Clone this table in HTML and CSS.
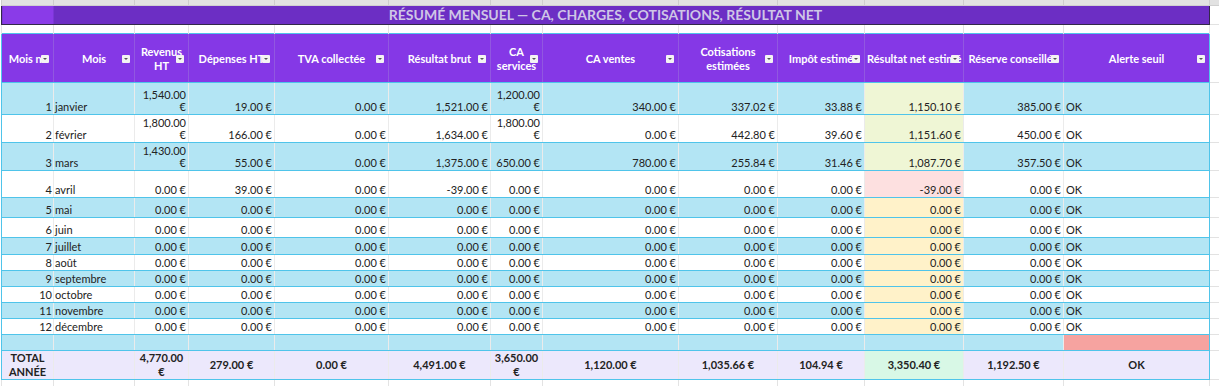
FILE: index.html
```html
<!DOCTYPE html>
<html lang="fr">
<head>
<meta charset="utf-8">
<title>Résumé mensuel</title>
<link rel="stylesheet" href="styles.css">
</head>
<body>
<table class="sheet">
  <colgroup>
    <col class="ca"><col class="cb"><col class="cc"><col class="cd"><col class="ce"><col class="cf"><col class="cg"><col class="ch"><col class="ci"><col class="cj"><col class="ck"><col class="cl"><col class="cm"><col class="cx">
  </colgroup>
  <tr class="r-top"><td></td><td></td><td></td><td></td><td></td><td></td><td></td><td></td><td></td><td></td><td></td><td></td><td></td><td></td></tr>
  <tr class="r-title"><td class="title" colspan="13">Résumé mensuel — CA, charges, cotisations, résultat net</td><td class="x"></td></tr>
  <tr class="r-gap"><td></td><td></td><td></td><td></td><td></td><td></td><td></td><td></td><td></td><td></td><td></td><td></td><td></td><td></td></tr>
  <tr class="r-head">
    <th class="first"><div class="hd">Mois n°</div><span class="fb"></span></th>
    <th><div class="hd">Mois</div><span class="fb"></span></th>
    <th><div class="hd wrap">Revenus HT</div><span class="fb"></span></th>
    <th><div class="hd">Dépenses HT</div><span class="fb"></span></th>
    <th><div class="hd">TVA collectée</div><span class="fb"></span></th>
    <th><div class="hd">Résultat brut</div><span class="fb"></span></th>
    <th><div class="hd wrap">CA services</div><span class="fb"></span></th>
    <th><div class="hd">CA ventes</div><span class="fb"></span></th>
    <th><div class="hd wrap">Cotisations estimées</div><span class="fb"></span></th>
    <th><div class="hd">Impôt estimé</div><span class="fb"></span></th>
    <th><div class="hd">Résultat net estimé</div><span class="fb"></span></th>
    <th><div class="hd">Réserve conseillée</div><span class="fb"></span></th>
    <th class="last"><div class="hd">Alerte seuil</div><span class="fb"></span></th>
    <td class="x"></td>
  </tr>
  <tr class="row h32 blue"><td class="n first">1</td><td class="m">janvier</td><td class="v">1,540.00 €</td><td class="v">19.00 €</td><td class="v">0.00 €</td><td class="v">1,521.00 €</td><td class="v">1,200.00 €</td><td class="v">340.00 €</td><td class="v">337.02 €</td><td class="v">33.88 €</td><td class="v k-g">1,150.10 €</td><td class="v">385.00 €</td><td class="ok last">OK</td><td class="x"></td></tr>
  <tr class="row h28"><td class="n first">2</td><td class="m">février</td><td class="v">1,800.00 €</td><td class="v">166.00 €</td><td class="v">0.00 €</td><td class="v">1,634.00 €</td><td class="v">1,800.00 €</td><td class="v">0.00 €</td><td class="v">442.80 €</td><td class="v">39.60 €</td><td class="v k-g">1,151.60 €</td><td class="v">450.00 €</td><td class="ok last">OK</td><td class="x"></td></tr>
  <tr class="row h28 blue"><td class="n first">3</td><td class="m">mars</td><td class="v">1,430.00 €</td><td class="v">55.00 €</td><td class="v">0.00 €</td><td class="v">1,375.00 €</td><td class="v">650.00 €</td><td class="v">780.00 €</td><td class="v">255.84 €</td><td class="v">31.46 €</td><td class="v k-g">1,087.70 €</td><td class="v">357.50 €</td><td class="ok last">OK</td><td class="x"></td></tr>
  <tr class="row h27"><td class="n first">4</td><td class="m">avril</td><td class="v">0.00 €</td><td class="v">39.00 €</td><td class="v">0.00 €</td><td class="v">-39.00 €</td><td class="v">0.00 €</td><td class="v">0.00 €</td><td class="v">0.00 €</td><td class="v">0.00 €</td><td class="v k-p">-39.00 €</td><td class="v">0.00 €</td><td class="ok last">OK</td><td class="x"></td></tr>
  <tr class="row h20 blue"><td class="n first">5</td><td class="m">mai</td><td class="v">0.00 €</td><td class="v">0.00 €</td><td class="v">0.00 €</td><td class="v">0.00 €</td><td class="v">0.00 €</td><td class="v">0.00 €</td><td class="v">0.00 €</td><td class="v">0.00 €</td><td class="v k-y">0.00 €</td><td class="v">0.00 €</td><td class="ok last">OK</td><td class="x"></td></tr>
  <tr class="row h20"><td class="n first">6</td><td class="m">juin</td><td class="v">0.00 €</td><td class="v">0.00 €</td><td class="v">0.00 €</td><td class="v">0.00 €</td><td class="v">0.00 €</td><td class="v">0.00 €</td><td class="v">0.00 €</td><td class="v">0.00 €</td><td class="v k-y">0.00 €</td><td class="v">0.00 €</td><td class="ok last">OK</td><td class="x"></td></tr>
  <tr class="row h17 blue"><td class="n first">7</td><td class="m">juillet</td><td class="v">0.00 €</td><td class="v">0.00 €</td><td class="v">0.00 €</td><td class="v">0.00 €</td><td class="v">0.00 €</td><td class="v">0.00 €</td><td class="v">0.00 €</td><td class="v">0.00 €</td><td class="v k-y">0.00 €</td><td class="v">0.00 €</td><td class="ok last">OK</td><td class="x"></td></tr>
  <tr class="row h16"><td class="n first">8</td><td class="m">août</td><td class="v">0.00 €</td><td class="v">0.00 €</td><td class="v">0.00 €</td><td class="v">0.00 €</td><td class="v">0.00 €</td><td class="v">0.00 €</td><td class="v">0.00 €</td><td class="v">0.00 €</td><td class="v k-y">0.00 €</td><td class="v">0.00 €</td><td class="ok last">OK</td><td class="x"></td></tr>
  <tr class="row h16 blue"><td class="n first">9</td><td class="m">septembre</td><td class="v">0.00 €</td><td class="v">0.00 €</td><td class="v">0.00 €</td><td class="v">0.00 €</td><td class="v">0.00 €</td><td class="v">0.00 €</td><td class="v">0.00 €</td><td class="v">0.00 €</td><td class="v k-y">0.00 €</td><td class="v">0.00 €</td><td class="ok last">OK</td><td class="x"></td></tr>
  <tr class="row h16"><td class="n first">10</td><td class="m">octobre</td><td class="v">0.00 €</td><td class="v">0.00 €</td><td class="v">0.00 €</td><td class="v">0.00 €</td><td class="v">0.00 €</td><td class="v">0.00 €</td><td class="v">0.00 €</td><td class="v">0.00 €</td><td class="v k-y">0.00 €</td><td class="v">0.00 €</td><td class="ok last">OK</td><td class="x"></td></tr>
  <tr class="row h16 blue"><td class="n first">11</td><td class="m">novembre</td><td class="v">0.00 €</td><td class="v">0.00 €</td><td class="v">0.00 €</td><td class="v">0.00 €</td><td class="v">0.00 €</td><td class="v">0.00 €</td><td class="v">0.00 €</td><td class="v">0.00 €</td><td class="v k-y">0.00 €</td><td class="v">0.00 €</td><td class="ok last">OK</td><td class="x"></td></tr>
  <tr class="row h16"><td class="n first">12</td><td class="m">décembre</td><td class="v">0.00 €</td><td class="v">0.00 €</td><td class="v">0.00 €</td><td class="v">0.00 €</td><td class="v">0.00 €</td><td class="v">0.00 €</td><td class="v">0.00 €</td><td class="v">0.00 €</td><td class="v k-y">0.00 €</td><td class="v">0.00 €</td><td class="ok last">OK</td><td class="x"></td></tr>
  <tr class="row h16 blue"><td class="first"></td><td></td><td></td><td></td><td></td><td></td><td></td><td></td><td></td><td></td><td></td><td></td><td class="last alert"></td><td class="x"></td></tr>
  <tr class="row total"><td class="first">TOTAL ANNÉE</td><td></td><td>4,770.00 €</td><td>279.00 €</td><td>0.00 €</td><td>4,491.00 €</td><td>3,650.00 €</td><td>1,120.00 €</td><td>1,035.66 €</td><td>104.94 €</td><td class="k-m">3,350.40 €</td><td>1,192.50 €</td><td class="last">OK</td><td class="x"></td></tr>
  <tr class="r-tail"><td></td><td></td><td></td><td></td><td></td><td></td><td></td><td></td><td></td><td></td><td></td><td></td><td></td><td></td></tr>
</table>
</body>
</html>
```

FILE: styles.css
```css
html, body {
  margin: 0;
  padding: 0;
  background: #ffffff;
  overflow: hidden;
}

body {
  font-family: Lato, "Liberation Sans", sans-serif;
  font-size: 11px;
  color: #222222;
}

.sheet {
  border-collapse: collapse;
  table-layout: fixed;
  width: 1220px;
  margin-left: 1px;
}

.ca { width: 52px; }
.cb { width: 81px; }
.cc { width: 54px; }
.cd { width: 86px; }
.ce { width: 114px; }
.cf { width: 102px; }
.cg { width: 52px; }
.ch { width: 136px; }
.ci { width: 99px; }
.cj { width: 87px; }
.ck { width: 99px; }
.cl { width: 100px; }
.cm { width: 146px; }
.cx { width: 12px; }

td, th {
  box-sizing: border-box;
  padding: 0;
  overflow: hidden;
}

/* top grey strip */
.r-top td {
  height: 5px;
  background: #e2e2e2;
  border-left: 1px solid #cdcdcd;
  border-bottom: 1px solid #d0d0d0;
}

/* title bar */
.r-title td {
  height: 19px;
}

.title {
  border: 1px solid #33294a;
  background: linear-gradient(to right, #8a3be8 0, #8a3be8 51px, #6c2ec4 51px);
  color: #cfc6e6;
  font-weight: 700;
  font-size: 14px;
  text-transform: uppercase;
  text-align: center;
  line-height: 17px;
  white-space: nowrap;
}

.r-gap td {
  height: 9px;
  border-left: 1px solid #e3e3e3;
}

/* header */
.r-head th {
  position: relative;
  height: 49px;
  background: #8538e6;
  color: #ffffff;
  font-weight: 700;
  font-size: 11px;
  border-top: 1px solid #4fc4ea;
  border-bottom: 1px solid #4fc4ea;
  border-left: 1px solid #9157e0;
  vertical-align: middle;
  padding-top: 3px;
}

.hd {
  text-align: center;
  white-space: nowrap;
  overflow: hidden;
  line-height: 14px;
  padding: 0 2px;
}

.hd.wrap {
  white-space: normal;
}

.fb {
  position: absolute;
  right: 4px;
  top: 21px;
  width: 8px;
  height: 8px;
  background: #f3f3f3;
  border-radius: 1px;
}

.fb::after {
  content: "";
  position: absolute;
  left: 2px;
  top: 3px;
  border-left: 2px solid transparent;
  border-right: 2px solid transparent;
  border-top: 2px solid #555555;
}

/* data rows */
.row td {
  background: #ffffff;
  border-bottom: 1px solid #4fc4ea;
  border-left: 1px solid rgba(0, 0, 0, 0.08);
  vertical-align: bottom;
  line-height: 12px;
  padding: 0 2px 1px 2px;
}

.row.blue td {
  background: #b3e5f4;
}

.row td.first, .r-head th.first {
  border-left: 1px solid #4fc4ea;
}

.row td.last, .r-head th.last {
  border-right: 1px solid #4fc4ea;
}

.h32 td { height: 32px; }
.h28 td { height: 28px; }
.h27 td { height: 27px; }
.h20 td { height: 20px; }
.h17 td { height: 17px; }
.h16 td { height: 16px; }

.n {
  text-align: right;
  padding-right: 1px !important;
}

.m {
  text-align: left;
  padding-left: 1px !important;
}

.v {
  text-align: right;
}

.ok {
  text-align: left;
}

.row td.k-g { background: #eff6d5; }
.row td.k-p { background: #fde0e0; }
.row td.k-y { background: #fff2c9; }
.row td.alert { background: #f6a3a0; }

.row.total td {
  height: 28px;
  padding: 0 2px;
  background: #ece8fc;
  text-align: center;
  vertical-align: middle;
  font-weight: 700;
  line-height: 14px;
  color: #222222;
}

.row.total td.k-m {
  background: #d8f8e6;
}

.sheet td.x {
  background: #ffffff;
  border-left: 1px solid #e2e2e2;
  border-bottom: 1px solid #e2e2e2;
}

.r-top td:last-child {
  background: #e2e2e2;
}

.r-tail td {
  height: 10px;
  border-left: 1px solid #e3e3e3;
}
```
